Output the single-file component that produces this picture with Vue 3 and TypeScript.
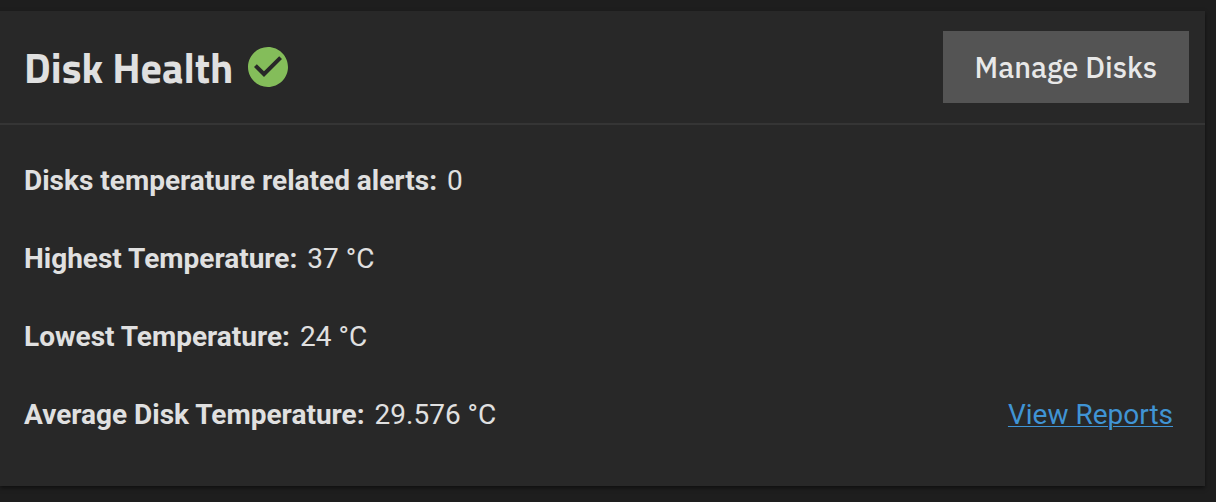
<script setup lang="ts">
interface Reading {
  label: string
  value: string
}

const readings: Reading[] = [
  { label: 'Disks temperature related alerts:', value: '0' },
  { label: 'Highest Temperature:', value: '37 °C' },
  { label: 'Lowest Temperature:', value: '24 °C' },
  { label: 'Average Disk Temperature:', value: '29.576 °C' },
]
</script>

<template>
  <main class="page">
    <section class="card" aria-labelledby="disk-health-title">
      <header class="card-header">
        <h3 id="disk-health-title" class="title">Disk Health</h3>
        <svg class="status" viewBox="0 0 24 24" role="img" aria-label="Healthy">
          <path
            d="M12 2C6.5 2 2 6.5 2 12S6.5 22 12 22 22 17.5 22 12 17.5 2 12 2M10 17L5 12L6.41 10.59L10 14.17L17.59 6.58L19 8L10 17Z"
          />
        </svg>
        <button type="button" class="manage">Manage Disks</button>
      </header>
      <div class="card-body">
        <dl class="readings">
          <div v-for="reading in readings" :key="reading.label" class="reading">
            <dt>{{ reading.label }}</dt>
            <dd>{{ reading.value }}</dd>
          </div>
        </dl>
        <a class="reports" href="#reports">View Reports</a>
      </div>
    </section>
  </main>
</template>

<style>
body {
  background: #1e1e1e;
}
</style>

<style scoped>
.page {
  padding: 11px 11px 16px 0;
  color: #e0e0e0;
  font-family: Roboto, "Liberation Sans", sans-serif;
  font-size: 28px;
  line-height: 32px;
}

.card {
  background: #282828;
  box-shadow: 0 2px 4px rgba(0, 0, 0, 0.5);
}

.card-header {
  display: flex;
  align-items: center;
  padding: 20px 16px 20px 24px;
  border-bottom: 2px solid #353535;
}

.title {
  margin: 0;
  font-family: "Titillium Web", Roboto, sans-serif;
  font-size: 42px;
  line-height: 48px;
  font-weight: 700;
}

.status {
  width: 48px;
  height: 48px;
  margin-left: 11px;
  fill: #84bd5a;
}

.manage {
  margin-left: auto;
  padding: 20px 32px;
  border: 0;
  background: #545454;
  color: #e8e8e8;
  font-family: "IBM Plex Sans", "Noto Sans", sans-serif;
  font-size: 29px;
  line-height: 32px;
  font-weight: 500;
}

.card-body {
  display: flex;
  align-items: flex-end;
  justify-content: space-between;
  padding: 40px 32px 55px 24px;
}

.readings {
  display: grid;
  gap: 46px;
  margin: 0;
}

.reading {
  display: flex;
  gap: 10px;
}

.reading dt {
  font-weight: 700;
}

.reading dd {
  margin: 0;
  font-weight: 400;
}

.reports {
  color: #4094d4;
  text-decoration-thickness: 1px;
  text-underline-offset: 2px;
}
</style>
